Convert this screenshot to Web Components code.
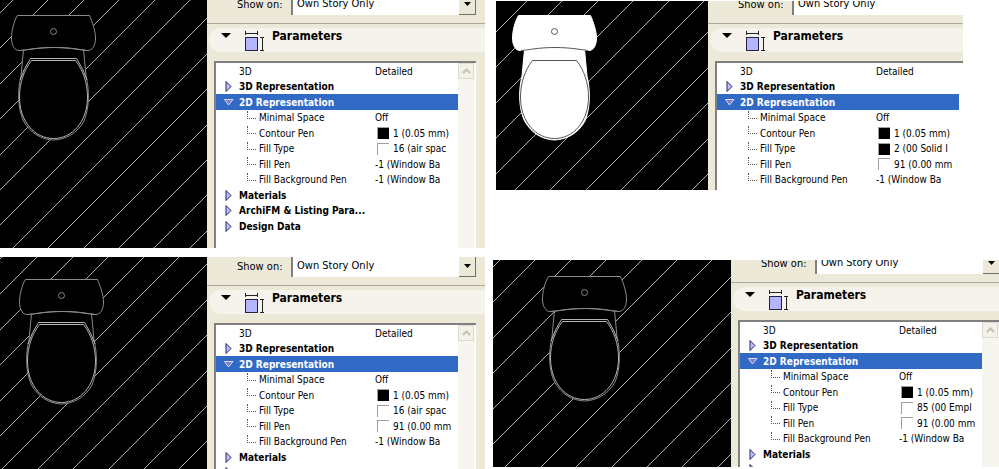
<!DOCTYPE html>
<html lang="en">
<head>
<meta charset="utf-8">
<title>Parameters</title>
<style>
  body {
    margin: 0;
    background: #fff;
    color: #000;
    font-family: "DejaVu Sans Condensed", "DejaVu Sans", sans-serif;
    font-size: 10px;
  }
</style>
</head>
<body>
<compare-board>
  <plan-frame>
    <plan-view hatch="13"></plan-view>
    <settings-panel crop="5">
      <param-row label="3D" value="Detailed"></param-row>
      <param-row group label="3D Representation"></param-row>
      <param-row group open label="2D Representation"></param-row>
      <param-row child label="Minimal Space" value="Off"></param-row>
      <param-row child label="Contour Pen" value="1 (0.05 mm)" swatch="black"></param-row>
      <param-row child label="Fill Type" value="16 (air spac" swatch="white"></param-row>
      <param-row child label="Fill Pen" value="-1 (Window Ba"></param-row>
      <param-row child label="Fill Background Pen" value="-1 (Window Ba"></param-row>
      <param-row group label="Materials"></param-row>
      <param-row group label="ArchiFM &amp; Listing Para..."></param-row>
      <param-row group label="Design Data"></param-row>
    </settings-panel>
  </plan-frame>

  <plan-frame class="short">
    <plan-view hatch="31" dx="5" dy="-1" solid></plan-view>
    <settings-panel crop="6">
      <param-row label="3D" value="Detailed"></param-row>
      <param-row group label="3D Representation"></param-row>
      <param-row group open label="2D Representation"></param-row>
      <param-row child label="Minimal Space" value="Off"></param-row>
      <param-row child label="Contour Pen" value="1 (0.05 mm)" swatch="black"></param-row>
      <param-row child label="Fill Type" value="2 (00 Solid I" swatch="black"></param-row>
      <param-row child label="Fill Pen" value="91 (0.00 mm" swatch="white"></param-row>
      <param-row child label="Fill Background Pen" value="-1 (Window Ba"></param-row>
    </settings-panel>
  </plan-frame>

  <plan-frame>
    <plan-view hatch="2" dx="8" dy="7"></plan-view>
    <settings-panel crop="0">
      <param-row label="3D" value="Detailed"></param-row>
      <param-row group label="3D Representation"></param-row>
      <param-row group open label="2D Representation"></param-row>
      <param-row child label="Minimal Space" value="Off"></param-row>
      <param-row child label="Contour Pen" value="1 (0.05 mm)" swatch="black"></param-row>
      <param-row child label="Fill Type" value="16 (air spac" swatch="white"></param-row>
      <param-row child label="Fill Pen" value="91 (0.00 mm" swatch="white"></param-row>
      <param-row child label="Fill Background Pen" value="-1 (Window Ba"></param-row>
      <param-row group label="Materials"></param-row>
      <param-row group label=""></param-row>
    </settings-panel>
  </plan-frame>

  <plan-frame class="wide">
    <plan-view hatch="7" dx="38" dy="1"></plan-view>
    <settings-panel crop="6">
      <param-row label="3D" value="Detailed"></param-row>
      <param-row group label="3D Representation"></param-row>
      <param-row group open label="2D Representation"></param-row>
      <param-row child label="Minimal Space" value="Off"></param-row>
      <param-row child label="Contour Pen" value="1 (0.05 mm)" swatch="black"></param-row>
      <param-row child label="Fill Type" value="85 (00 Empl" swatch="white"></param-row>
      <param-row child label="Fill Pen" value="91 (0.00 mm" swatch="white"></param-row>
      <param-row child label="Fill Background Pen" value="-1 (Window Ba"></param-row>
      <param-row group label="Materials"></param-row>
      <param-row group label=""></param-row>
    </settings-panel>
  </plan-frame>
</compare-board>

<script>
// Two by two board that holds the frames
class CompareBoard extends HTMLElement {
  connectedCallback() {
    this.attachShadow({ mode: 'open' });
    this.shadowRoot.innerHTML = `
      <style>
        :host {
          display: grid;
          grid-template-columns: minmax(0, 485fr) minmax(0, 506fr);
          grid-template-rows: minmax(0, 248fr) minmax(0, 212fr);
          gap: 9px 8px;
          height: 100vh;
          overflow: hidden;
        }
        ::slotted(.short) {
          --panel-width: 255px;
          --scroll: hidden;
          margin: 1px 36px 58px 3px;
        }
        ::slotted(.wide) {
          --panel-width: 268px;
          margin: 3px 0 2px;
        }
      </style>
      <slot></slot>
    `;
  }
}

// A drawing on the left, its settings on the right
class PlanFrame extends HTMLElement {
  connectedCallback() {
    this.attachShadow({ mode: 'open' });
    this.shadowRoot.innerHTML = `
      <style>
        :host {
          display: flex;
          min-height: 0;
          overflow: hidden;
        }
      </style>
      <slot></slot>
    `;
  }
}

// Floor plan with 45 degree hatching and the toilet symbol
class PlanView extends HTMLElement {
  connectedCallback() {
    const first = Number(this.getAttribute('hatch'));
    const dx = this.getAttribute('dx') || 0;
    const dy = this.getAttribute('dy') || 0;
    let hatch = '';
    for (let i = 0; i < 50; i++) {
      const c = Math.round(first + i * 35.4);
      hatch += `M${c} 0L0 ${c}`;
    }

    this.attachShadow({ mode: 'open' });
    this.shadowRoot.innerHTML = `
      <style>
        :host {
          --fill: #000;
          --line: #8a8a8a;
          --seat: #b4b4b4;
          display: flex;
          flex: 1 1 0;
          min-width: 0;
          background: #000;
          overflow: hidden;
        }
        :host([solid]) {
          --fill: #fff;
          --line: #555;
          --seat: #555;
        }
        svg {
          flex: 1;
          min-width: 0;
          height: 100%;
        }
        .hatch {
          fill: none;
          stroke: #b0b0b0;
          shape-rendering: crispEdges;
        }
        .body {
          fill: var(--fill);
          stroke: var(--line);
        }
        .edge {
          fill: none;
          stroke: var(--line);
        }
        .seat {
          fill: none;
          stroke: var(--seat);
        }
        :host([solid]) .outer {
          stroke: #fff;
        }
        :host([solid]) .rim {
          display: none;
        }
      </style>
      <svg role="img" aria-label="Toilet in plan view">
        <path class="hatch" d="${hatch}"/>
        <g transform="translate(${dx} ${dy})">
          <path class="body outer" d="M24 44L21 76C17.5 90 17.500 108 23.500 121C31 134 42 139.500 53.500 140C65 139.500 77 134 84 121C89.5 108 89.5 90 86 76L83 44Z"/>
          <path class="body outer" d="M17.500 15.500H89.500C92 21 95.500 31 95.500 38C95.500 46 92 50.500 88 50.500C84 50.500 80 49.500 76 49C62 47 46 47 32 49C28 49.500 23 50.500 19 50.500C15 50.500 11.500 46 11.500 38C11.500 31 14 21 17.500 15.500Z"/>
          <path class="edge" d="M20 50.500C26 50 28 49.500 32 49C46 47 62 47 76 49C80 49.500 83 50 87 50.500"/>
          <circle class="body" cx="53.500" cy="31.500" r="3"/>
          <path class="seat rim" d="M20 80Q24 68 30.500 58.500H76.500Q83 68 87 80"/>
          <path class="seat" d="M31.500 60.500H75.500C83 70 87.500 83 87.500 97C87.500 122 72 138.500 53.500 138.500C35 138.500 19.500 122 19.500 97C19.500 83 24 70 31.500 60.500Z"/>
        </g>
      </svg>
    `;
  }
}

// Dialog part: story select, Parameters header and the list
class SettingsPanel extends HTMLElement {
  connectedCallback() {
    const crop = this.getAttribute('crop') || 0;

    this.attachShadow({ mode: 'open' });
    this.shadowRoot.innerHTML = `
      <style>
        :host {
          flex: 0 0 var(--panel-width, 278px);
          background: #ece9d8;
          overflow: hidden;
        }
        .dialog {
          display: flex;
          flex-direction: column;
          width: 278px;
          margin-top: -${crop}px;
        }
        .story {
          display: flex;
          align-items: center;
          height: 20px;
          padding: 0 9px 8px 30px;
          border-bottom: 1px solid #aca899;
          font-size: 11px;
        }
        .story label {
          width: 54px;
          padding-bottom: 2px;
        }
        .combo {
          flex: 1;
          display: flex;
          position: relative;
          height: 20px;
        }
        select {
          appearance: none;
          flex: 1;
          min-width: 0;
          margin: 0;
          padding: 0 18px 3px 4px;
          border: 0;
          border-left: 2px solid #808080;
          border-radius: 0;
          background: #fff;
          color: #000;
          font: inherit;
        }
        .drop {
          visibility: var(--scroll, visible);
          position: absolute;
          top: 0;
          right: 0;
          width: 17px;
          height: 100%;
          box-sizing: border-box;
          background: #ece9d8;
          border-right: 1px solid #716f64;
          border-bottom: 1px solid #716f64;
          pointer-events: none;
        }
        .drop svg {
          display: block;
          margin: 7px auto 0;
        }
        h2 {
          margin: 4px 0 0 2px;
          font-size: 12px;
        }
        .title {
          display: flex;
          align-items: flex-start;
          width: 100%;
          height: 24px;
          padding: 0 0 0 12px;
          border: 0;
          border-radius: 12px 0 0 12px;
          background: #f5f3eb;
          color: #000;
          font: inherit;
          line-height: 16px;
          text-align: left;
        }
        .title .arrow {
          margin: 5px 13px 0 0;
        }
        .title .size {
          margin: 3px 8px 0 0;
        }
        .list {
          display: flex;
          margin: 9px 9px 0 7px;
          border: solid #808080;
          border-width: 2px 0 0 2px;
          background: #fff;
        }
        .rows {
          flex: 1;
          min-width: 0;
          min-height: 200px;
        }
        ::slotted(*) {
          height: 16px;
        }
        ::slotted(:nth-child(even)) {
          height: 15px;
        }
        .scroll {
          visibility: var(--scroll, visible);
          width: 17px;
          background: #f6f5ef;
          border-right: 1px solid #fff;
        }
        .scroll button {
          display: block;
          width: 16px;
          height: 16px;
          padding: 0;
          border: 1px solid #dedbcd;
          background: #f3f1e8;
        }
        .scroll svg {
          display: block;
          margin: auto;
        }
      </style>
      <div class="dialog">
        <div class="story">
          <label for="story">Show on:</label>
          <div class="combo">
            <select id="story"><option>Own Story Only</option></select>
            <span class="drop"><svg width="7" height="4"><path d="M0 0H7L3.5 4Z"/></svg></span>
          </div>
        </div>
        <h2>
          <button class="title" aria-expanded="true">
            <svg class="arrow" width="10" height="5"><path d="M0 0H10L5 5Z"/></svg>
            <svg class="size" width="20" height="21" shape-rendering="crispEdges">
              <rect x="1.500" y="6.500" width="12" height="13" fill="#b4b4ff" stroke="#22223c"/>
              <path d="M1.500 0V4M13.500 0V4M1 2.500H14M16 6.500H20M16 19.500H20M18.500 7V19" fill="none" stroke="#222"/>
            </svg>
            <span>Parameters</span>
          </button>
        </h2>
        <div class="list">
          <div class="rows"><slot></slot></div>
          <div class="scroll">
            <button aria-label="Scroll up">
              <svg width="9" height="6"><path d="M1 5L4.500 1.500L8 5" fill="none" stroke="#c5c2b4" stroke-width="2"/></svg>
            </button>
          </div>
        </div>
      </div>
    `;
  }
}

class ParamRow extends HTMLElement {
  connectedCallback() {
    const label = this.getAttribute('label').replace('&', '&amp;');
    const value = this.getAttribute('value') || '';
    const swatch = this.getAttribute('swatch');
    const isGroup = this.hasAttribute('group');
    const isOpen = this.hasAttribute('open');

    let name = `<span class="name">${label}</span>`;
    if (isGroup) {
      const shape = isOpen ? 'M0.5 2.5H9L4.5 8Z' : 'M2 0.5V10.5L7 5.5Z';
      name = `
        <button class="name" aria-expanded="${isOpen}" aria-label="${label || 'More'}">
          <svg width="10" height="11"><path d="${shape}"/></svg>${label}
        </button>`;
    }

    this.attachShadow({ mode: 'open' });
    this.shadowRoot.innerHTML = `
      <style>
        :host {
          display: flex;
          align-items: center;
          white-space: nowrap;
          overflow: hidden;
        }
        :host([open]) {
          background: #316ac5;
          color: #fff;
        }
        .name {
          flex: 0 0 136px;
          padding: 0 0 0 23px;
        }
        button.name {
          display: flex;
          align-items: center;
          gap: 5px;
          padding-left: 8px;
          border: 0;
          background: none;
          color: inherit;
          font: inherit;
          font-weight: bold;
        }
        button path {
          fill: #c0c0ff;
          stroke: #22226a;
        }
        :host([open]) button path {
          fill: #7d7dc8;
          stroke: #d8d8ff;
        }
        .branch {
          flex: 0 0 8px;
          height: 7px;
          margin: 0 3px 6px 31px;
          border: dotted #555;
          border-width: 0 0 1px 1px;
        }
        :host([child]) .name {
          flex-basis: 116px;
          padding: 0;
        }
        .value {
          display: flex;
          align-items: center;
          flex: 1;
        }
        .swatch {
          flex: none;
          box-sizing: border-box;
          width: 12px;
          height: 12px;
          margin: 0 4px 0 2px;
          border: solid #a0a0a0;
          border-width: 1px 0 0 1px;
          background: #fff;
        }
        .swatch.black {
          background: #000;
        }
      </style>
      ${this.hasAttribute('child') ? '<span class="branch"></span>' : ''}
      ${name}
      ${value ? `<span class="value">${swatch ? `<span class="swatch ${swatch}"></span>` : ''}${value}</span>` : ''}
    `;
  }
}

customElements.define('compare-board', CompareBoard);
customElements.define('plan-frame', PlanFrame);
customElements.define('plan-view', PlanView);
customElements.define('settings-panel', SettingsPanel);
customElements.define('param-row', ParamRow);
</script>
</body>
</html>
